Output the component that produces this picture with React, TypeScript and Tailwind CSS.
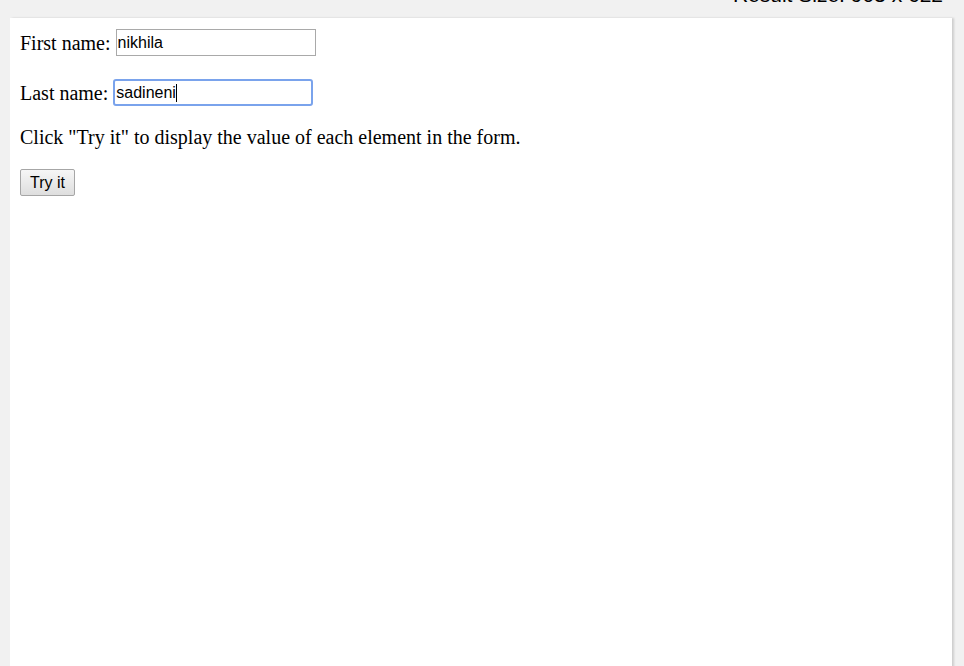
import React from 'react';

const App = () => {
  return (
    <div className="min-h-screen bg-[#f1f1f1] overflow-hidden">
      {/* result size header, mostly scrolled off the top */}
      <div className="h-[18px] overflow-hidden flex justify-end pr-[21px]">
        <span className="-mt-[16px] text-[21px] leading-[21px] text-black font-['Liberation_Sans',Arial,sans-serif]">
          Result Size: 903 x 622
        </span>
      </div>

      <div className="ml-[10px] w-[942px] h-[660px] bg-white shadow-[2px_0_2px_rgba(0,0,0,0.15)] px-[10px] pt-[11px] font-['Liberation_Serif','Times_New_Roman',serif] text-[20px] text-black">
        <form className="flex flex-col">
          <div className="flex items-center h-[27px]">
            <span className="mr-[5px]">First name:</span>
            <input
              type="text"
              defaultValue="nikhila"
              className="w-[200px] h-[27px] border border-[#a9a9a9] px-[1px] text-[16px] font-['Liberation_Sans',Arial,sans-serif] outline-none"
            />
          </div>
          <div className="h-[23px]" />
          <div className="flex items-center h-[27px]">
            <span className="mr-[5px]">Last name:</span>
            <div className="w-[200px] h-[27px] border-[2px] border-[#7aa3ec] rounded-[3px] px-[1px] text-[16px] leading-[23px] font-['Liberation_Sans',Arial,sans-serif] flex items-center">
              <span>sadineni</span>
              <span className="w-[1px] h-[18px] bg-black" />
            </div>
          </div>
        </form>
        <p className="mt-[20px] leading-[23px]">
          Click "Try it" to display the value of each element in the form.
        </p>
        <button
          type="button"
          className="mt-[20px] w-[55px] h-[27px] border border-[#a6a6a6] rounded-[2px] bg-gradient-to-b from-[#f6f6f6] to-[#dedede] text-[16px] font-['Liberation_Sans',Arial,sans-serif] text-black"
        >
          Try it
        </button>
      </div>
    </div>
  );
};

export default App;
